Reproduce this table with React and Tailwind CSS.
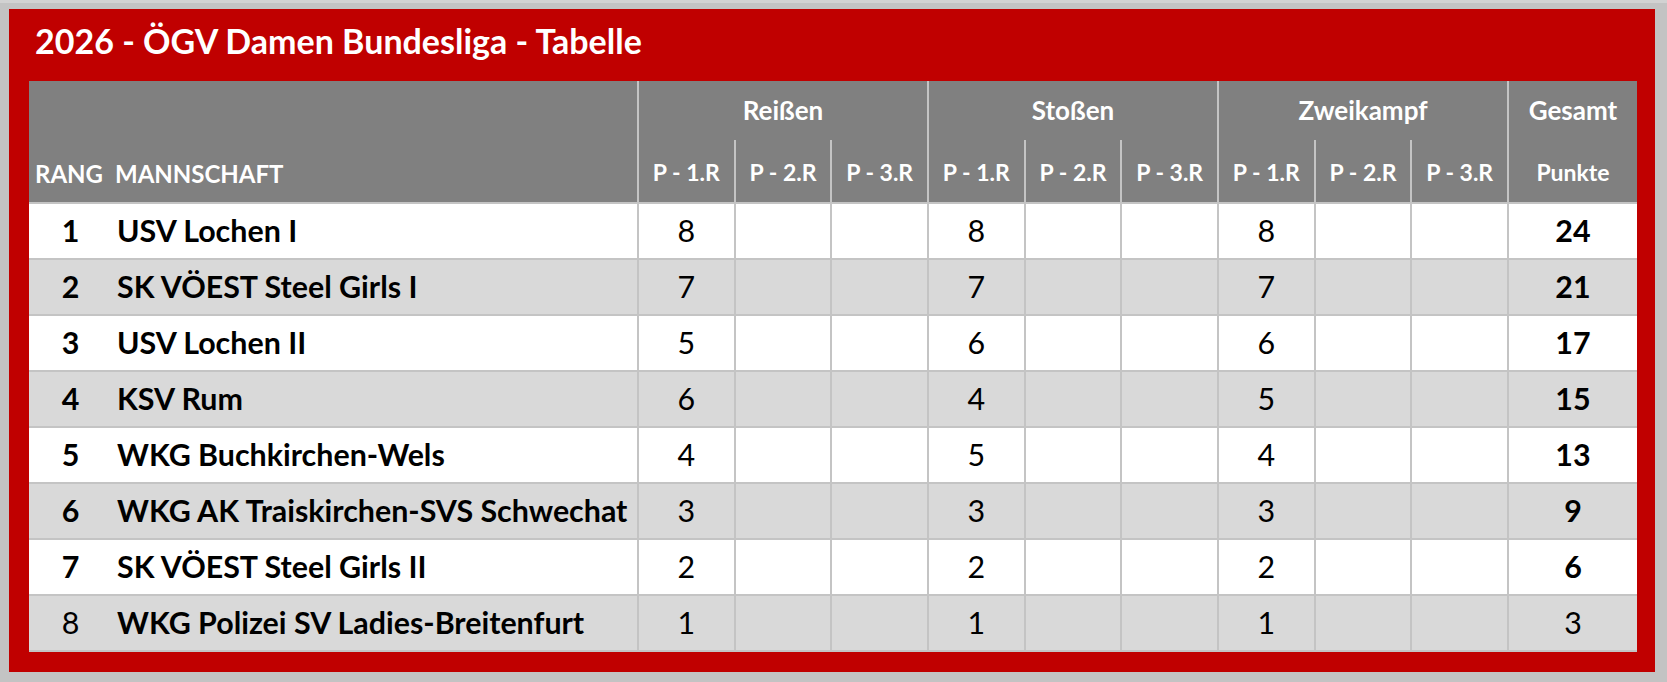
import React from "react";

const teams = [
  { rang: 1, name: "USV Lochen I", r: 8, s: 8, z: 8, total: 24 },
  { rang: 2, name: "SK VÖEST Steel Girls I", r: 7, s: 7, z: 7, total: 21 },
  { rang: 3, name: "USV Lochen II", r: 5, s: 6, z: 6, total: 17 },
  { rang: 4, name: "KSV Rum", r: 6, s: 4, z: 5, total: 15 },
  { rang: 5, name: "WKG Buchkirchen-Wels", r: 4, s: 5, z: 4, total: 13 },
  { rang: 6, name: "WKG AK Traiskirchen-SVS Schwechat", r: 3, s: 3, z: 3, total: 9 },
  { rang: 7, name: "SK VÖEST Steel Girls II", r: 2, s: 2, z: 2, total: 6 },
  { rang: 8, name: "WKG Polizei SV Ladies-Breitenfurt", r: 1, s: 1, z: 1, total: 3, plain: true },
];

const groups = ["Reißen", "Stoßen", "Zweikampf"];

function GroupHeader({ label }) {
  return (
    <div className="w-[290px] shrink-0 border-l-2 border-[#c4c4c4] flex flex-col">
      <div className="h-[60px] flex items-center justify-center text-[26px] font-bold">
        {label}
      </div>
      <div className="flex h-[63px]">
        {["P - 1.R", "P - 2.R", "P - 3.R"].map((p, i) => (
          <div
            key={p}
            className={
              "flex-1 flex items-center justify-center text-[23px] font-bold pt-[2px] " +
              (i > 0 ? "border-l-2 border-[#c4c4c4]" : "")
            }
          >
            {p}
          </div>
        ))}
      </div>
    </div>
  );
}

function ScoreCells({ value }) {
  return (
    <div className="w-[290px] shrink-0 flex">
      <div className="flex-1 border-l-2 border-[#c4c4c4] flex items-center justify-center">
        {value}
      </div>
      <div className="flex-1 border-l-2 border-[#c4c4c4]" />
      <div className="flex-1 border-l-2 border-[#c4c4c4]" />
    </div>
  );
}

export default function App() {
  return (
    <div
      className="w-[1667px] h-[682px] bg-[#c3c3c3] pt-[9px] pl-[9px] border-t-[3px] border-[#d2d2d2]"
      style={{ fontFamily: "Lato, 'Open Sans', sans-serif" }}
    >
      <div className="w-[1646px] h-[663px] bg-[#c00000] -mt-[3px]">
        <div className="h-[72px] flex items-center pl-[26px] pb-[10px] text-white text-[34px] font-bold">
          2026 - ÖGV Damen Bundesliga - Tabelle
        </div>

        <div className="ml-[20px] w-[1608px]">
          {/* header */}
          <div className="flex bg-[#808080] text-white h-[123px] border-b-2 border-[#c4c4c4]">
            <div className="w-[608px] shrink-0 flex items-end pb-[10px] pl-[6px] text-[24px] font-bold">
              <span className="w-[80px]">RANG</span>
              <span>MANNSCHAFT</span>
            </div>
            {groups.map((g) => (
              <GroupHeader key={g} label={g} />
            ))}
            <div className="w-[130px] shrink-0 border-l-2 border-[#c4c4c4] flex flex-col">
              <div className="h-[60px] flex items-center justify-center text-[26px] font-bold">
                Gesamt
              </div>
              <div className="h-[63px] flex items-center justify-center text-[23px] font-bold pt-[2px]">
                Punkte
              </div>
            </div>
          </div>

          {/* rows */}
          {teams.map((t, i) => (
            <div
              key={t.rang}
              className={
                "flex h-[56px] text-black text-[30.4px] border-b-2 border-[#c4c4c4] " +
                (i % 2 === 0 ? "bg-white" : "bg-[#d9d9d9]")
              }
            >
              <div
                className={
                  "w-[81px] shrink-0 flex items-center justify-center pl-[2px] " +
                  (t.plain ? "font-normal" : "font-bold")
                }
              >
                {t.rang}
              </div>
              <div className="w-[527px] shrink-0 flex items-center pl-[7px] font-bold whitespace-nowrap">
                {t.name}
              </div>
              <ScoreCells value={t.r} />
              <ScoreCells value={t.s} />
              <ScoreCells value={t.z} />
              <div
                className={
                  "w-[130px] shrink-0 border-l-2 border-[#c4c4c4] flex items-center justify-center " +
                  (t.plain ? "font-normal" : "font-bold")
                }
              >
                {t.total}
              </div>
            </div>
          ))}
        </div>
      </div>
    </div>
  );
}
